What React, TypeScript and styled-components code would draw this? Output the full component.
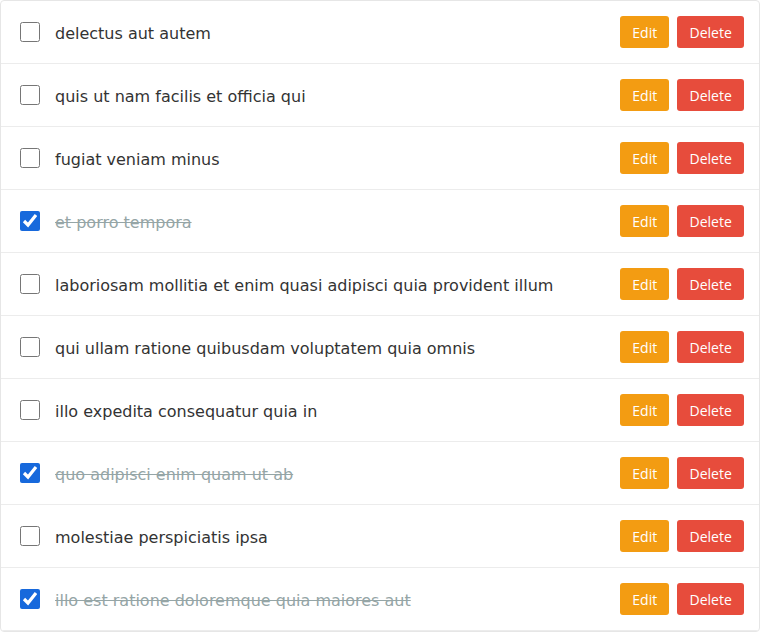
import React, { useState } from "react";
import styled, { createGlobalStyle } from "styled-components";

const Global = createGlobalStyle`
  html, body { margin: 0; padding: 0; background: #fff; }
  body { font-family: "DejaVu Sans", sans-serif; }
`;

const List = styled.ul`
  list-style: none;
  margin: 0;
  padding: 0;
  width: 760px;
  box-sizing: border-box;
  border: 1px solid #e6e6e6;
  border-radius: 4px;
  overflow: hidden;
`;

const Row = styled.li`
  display: flex;
  align-items: center;
  height: 62px;
  padding: 0 15px 0 19px;
  border-bottom: 1px solid #ececec;
`;

const Check = styled.input`
  width: 20px;
  height: 20px;
  margin: 0 15px 0 0;
  flex: none;
  accent-color: #1769dc;
`;

const Title = styled.span<{ $done: boolean }>`
  flex: 1;
  font-size: 16px;
  padding-top: 2px;
  color: ${(p) => (p.$done ? "#95a5a6" : "#333")};
  text-decoration: ${(p) => (p.$done ? "line-through" : "none")};
`;

const Actions = styled.div`
  display: flex;
  gap: 8px;
`;

const Button = styled.button<{ $kind: "edit" | "delete" }>`
  height: 32px;
  padding: 0 12.2px;
  border: none;
  border-radius: 3px;
  font-family: "Open Sans", sans-serif;
  font-size: 14px;
  color: #fff;
  background: ${(p) => (p.$kind === "edit" ? "#f39c12" : "#e74c3c")};
  cursor: pointer;
`;

const initial = [
  { title: "delectus aut autem", done: false },
  { title: "quis ut nam facilis et officia qui", done: false },
  { title: "fugiat veniam minus", done: false },
  { title: "et porro tempora", done: true },
  { title: "laboriosam mollitia et enim quasi adipisci quia provident illum", done: false },
  { title: "qui ullam ratione quibusdam voluptatem quia omnis", done: false },
  { title: "illo expedita consequatur quia in", done: false },
  { title: "quo adipisci enim quam ut ab", done: true },
  { title: "molestiae perspiciatis ipsa", done: false },
  { title: "illo est ratione doloremque quia maiores aut", done: true },
];

export default function App() {
  const [items, setItems] = useState(initial);
  return (
    <>
      <Global />
      <List>
        {items.map((it, i) => (
          <Row key={i}>
            <Check
              type="checkbox"
              checked={it.done}
              onChange={() =>
                setItems((s) => s.map((x, j) => (j === i ? { ...x, done: !x.done } : x)))
              }
            />
            <Title $done={it.done}>{it.title}</Title>
            <Actions>
              <Button $kind="edit">Edit</Button>
              <Button $kind="delete">Delete</Button>
            </Actions>
          </Row>
        ))}
      </List>
    </>
  );
}
